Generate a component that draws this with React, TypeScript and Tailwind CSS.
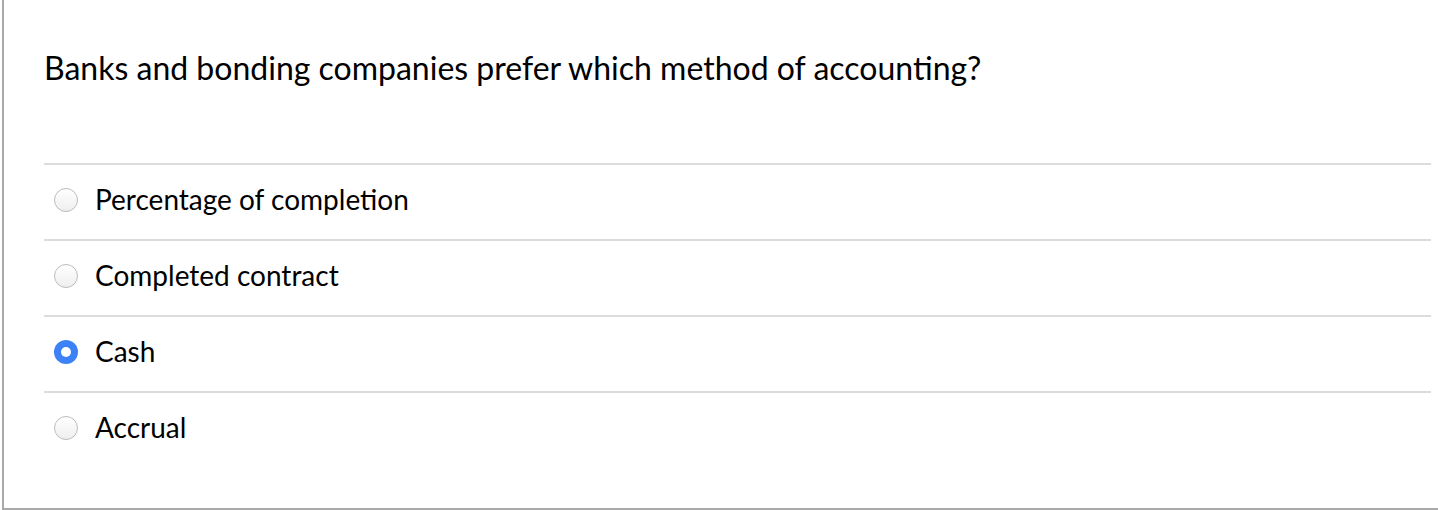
import React, { useState } from "react";

const options = [
  "Percentage of completion",
  "Completed contract",
  "Cash",
  "Accrual",
];

const Radio = ({ checked }: { checked: boolean }) => {
  if (checked) {
    return (
      <span className="flex h-[24px] w-[24px] shrink-0 items-center justify-center rounded-full bg-[#3c82f6]">
        <span className="h-[10px] w-[10px] rounded-full bg-white" />
      </span>
    );
  }
  return (
    <span className="h-[24px] w-[24px] shrink-0 rounded-full border border-[#bcbcbc] bg-gradient-to-b from-[#ffffff] to-[#efefef]" />
  );
};

export default function App() {
  const [selected, setSelected] = useState(2);

  return (
    <div
      className="ml-[2px] h-[510px] border-b-2 border-l-2 border-[#a9a9a9] bg-white pl-[40px] pr-[7px] text-black"
      style={{ fontFamily: "Lato, 'Noto Sans', sans-serif" }}
    >
      <h2 className="pt-[49px] pb-[76px] text-[32px] leading-[38px] font-normal">
        Banks and bonding companies prefer which method of accounting?
      </h2>

      <ul>
        {options.map((opt, i) => (
          <li
            key={opt}
            className="flex h-[76px] cursor-pointer items-center gap-[17px] border-t-2 border-[#dcdcdc] pb-[4px] pl-[10px]"
            onClick={() => setSelected(i)}
          >
            <Radio checked={selected === i} />
            <span className="mb-[2px] text-[28px] leading-[34px]">{opt}</span>
          </li>
        ))}
      </ul>
    </div>
  );
}
